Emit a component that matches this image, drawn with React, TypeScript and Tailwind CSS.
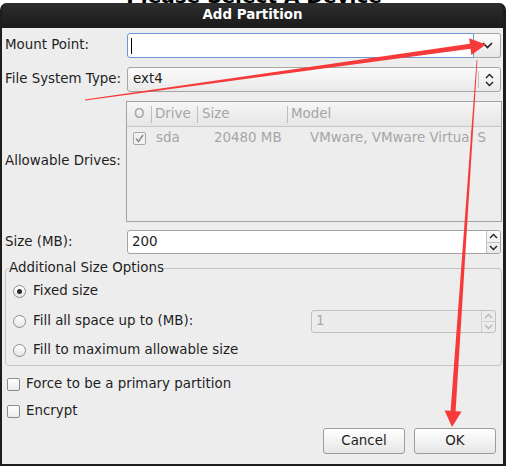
import React from "react";

function ChevDown({ color = "#222" }: { color?: string }) {
  return (
    <svg width="11" height="7" viewBox="0 0 11 7">
      <polyline points="1,1 5.5,5.5 10,1" fill="none" stroke={color} strokeWidth="1.6" />
    </svg>
  );
}
function ChevUp({ color = "#222" }: { color?: string }) {
  return (
    <svg width="9" height="6" viewBox="0 0 9 6">
      <polyline points="1,5 4.5,1.5 8,5" fill="none" stroke={color} strokeWidth="1.4" />
    </svg>
  );
}
function ChevDownSmall({ color = "#222" }: { color?: string }) {
  return (
    <svg width="9" height="6" viewBox="0 0 9 6">
      <polyline points="1,1 4.5,4.5 8,1" fill="none" stroke={color} strokeWidth="1.4" />
    </svg>
  );
}

function Radio({ checked }: { checked?: boolean }) {
  return (
    <div className="w-[13px] h-[13px] rounded-full border border-[#8c8c8c] bg-gradient-to-b from-[#ffffff] to-[#e6e6e6] flex items-center justify-center">
      {checked && <div className="w-[5px] h-[5px] rounded-full bg-[#2a2a2a]" />}
    </div>
  );
}

function Check() {
  return <div className="w-[13px] h-[13px] border border-[#8c8c8c] rounded-[2px] bg-gradient-to-b from-[#ffffff] to-[#ececec]" />;
}

function Label({ children }: { children: React.ReactNode }) {
  return <div className="w-[122px] shrink-0 text-[13.4px] text-[#1e1e1e]">{children}</div>;
}

export default function App() {
  return (
    <div className="relative w-[508px] h-[468px] bg-white overflow-hidden font-['DejaVu_Sans',sans-serif]">
      {/* fragment of window behind */}
      <div className="h-[3px] overflow-hidden flex justify-center">
        <div className="-mt-[16px] text-[20px] leading-[24px] font-bold text-black whitespace-nowrap">Please Select A Device</div>
      </div>

      {/* dialog */}
      <div className="w-[506px] h-[463px] bg-[#1d1d1d] rounded-t-[7px] border-l-2 border-r-[3px] border-b-2 border-[#1d1d1d] flex flex-col">
        <div className="h-[25px] shrink-0 flex items-center justify-center rounded-t-[7px] bg-gradient-to-b from-[#2e2e2e] to-[#1a1a1a] text-white font-bold text-[13.4px]">
          Add Partition
        </div>

        <div className="flex-1 bg-[#ededed] pl-[3px] pr-[2px] pt-[5px] flex flex-col text-[13.4px] text-[#1e1e1e]">
          {/* Mount point */}
          <div className="flex items-center h-[25px]">
            <Label>Mount Point:</Label>
            <div className="flex flex-1 h-[25px]">
              <div className="flex-1 bg-white border border-[#6f96cf] rounded-l-[3px] flex items-center pl-[3px]">
                <div className="w-[1px] h-[16px] bg-black" />
              </div>
              <div className="w-[27px] border border-l-0 border-[#a6a6a6] rounded-r-[3px] bg-gradient-to-b from-[#fbfbfb] to-[#e8e8e8] flex items-center justify-center">
                <ChevDown />
              </div>
            </div>
          </div>

          {/* FS type */}
          <div className="flex items-center h-[25px] mt-[9px]">
            <Label>File System Type:</Label>
            <div className="flex flex-1 h-[25px] border border-[#a6a6a6] rounded-[3px] bg-gradient-to-b from-[#fbfbfb] to-[#e9e9e9] items-center">
              <div className="flex-1 pl-[5px]">ext4</div>
              <div className="w-[1px] h-[17px] bg-[#c4c4c4]" />
              <div className="w-[21px] flex flex-col items-center justify-center gap-[2px]">
                <ChevUp />
                <ChevDownSmall />
              </div>
            </div>
          </div>

          {/* Allowable drives */}
          <div className="flex items-center h-[121px] mt-[9px]">
            <Label>Allowable Drives:</Label>
            <div className="flex-1 -ml-[1px] -mr-[1px] h-[121px] border border-[#a3a3a3] bg-[#ededed] flex flex-col text-[#a5a5a5] overflow-hidden">
              <div className="h-[25px] shrink-0 flex items-center border-b border-[#c6c6c6] bg-gradient-to-b from-[#f6f6f6] to-[#e6e6e6]">
                <div className="w-[24px] pl-[7px]">O</div>
                <div className="w-[1px] h-[17px] bg-[#bdbdbd]" />
                <div className="w-[45px] pl-[3px]">Drive</div>
                <div className="w-[1px] h-[17px] bg-[#bdbdbd]" />
                <div className="w-[89px] pl-[4px]">Size</div>
                <div className="w-[1px] h-[17px] bg-[#bdbdbd]" />
                <div className="pl-[3px]">Model</div>
              </div>
              <div className="h-[22px] flex items-center whitespace-nowrap">
                <div className="ml-[6px] w-[13px] h-[13px] border border-[#a8a8a8] rounded-[2px] flex items-center justify-center bg-[#f2f2f2]">
                  <svg width="9" height="9" viewBox="0 0 9 9">
                    <polyline points="1,4.5 3.5,7.5 8,1" fill="none" stroke="#8a8a8a" strokeWidth="1.5" />
                  </svg>
                </div>
                <div className="ml-[10px] w-[58px]">sda</div>
                <div className="w-[96px]">20480 MB</div>
                <div>VMware, VMware Virtual S</div>
              </div>
            </div>
          </div>

          {/* Size */}
          <div className="flex items-center h-[24px] mt-[8px]">
            <Label>Size (MB):</Label>
            <div className="flex flex-1 h-[24px] bg-white border border-[#a3a3a3] rounded-[3px] overflow-hidden">
              <div className="flex-1 flex items-center pl-[4px]">200</div>
              <div className="w-[14px] flex flex-col border-l border-[#c2c2c2] bg-gradient-to-b from-[#fafafa] to-[#e8e8e8]">
                <div className="flex-1 flex items-center justify-center border-b border-[#c2c2c2]"><ChevUp /></div>
                <div className="flex-1 flex items-center justify-center"><ChevDownSmall /></div>
              </div>
            </div>
          </div>

          {/* Additional size options */}
          <fieldset className="mt-[6px] mr-[-1px] border border-[#c4c4c4] rounded-[4px] px-[7px] pb-[3px] flex flex-col">
            <legend className="-ml-[4px] leading-[16px] px-0">Additional Size Options</legend>
            <div className="flex items-center h-[24px] mt-[3px] gap-[7px]">
              <Radio checked />
              <span>Fixed size</span>
            </div>
            <div className="flex items-center h-[23px] mt-[7px]">
              <Radio />
              <span className="ml-[7px] flex-1">Fill all space up to (MB):</span>
              <div className="w-[185px] h-[23px] flex border border-[#c0c0c0] rounded-[3px] bg-[#ececec] mr-[-2px]">
                <div className="flex-1 flex items-center pl-[4px] text-[#a8a8a8]">1</div>
                <div className="w-[14px] flex flex-col border-l border-[#d0d0d0]">
                  <div className="flex-1 flex items-center justify-center border-b border-[#d0d0d0]"><ChevUp color="#b5b5b5" /></div>
                  <div className="flex-1 flex items-center justify-center"><ChevDownSmall color="#b5b5b5" /></div>
                </div>
              </div>
            </div>
            <div className="flex items-center h-[24px] mt-[5px] gap-[7px]">
              <Radio />
              <span>Fill to maximum allowable size</span>
            </div>
          </fieldset>

          {/* Checkboxes */}
          <div className="flex items-center h-[20px] mt-[8px] pl-[2px] gap-[6px]">
            <Check />
            <span>Force to be a primary partition</span>
          </div>
          <div className="flex items-center h-[20px] mt-[7px] pl-[2px] gap-[6px]">
            <Check />
            <span>Encrypt</span>
          </div>

          {/* Buttons */}
          <div className="flex justify-end gap-[9px] mt-[7px] mr-[5px]">
            <div className="w-[82px] h-[26px] border border-[#9c9c9c] rounded-[3px] bg-gradient-to-b from-[#ffffff] to-[#e6e6e6] flex items-center justify-center">Cancel</div>
            <div className="w-[82px] h-[26px] border border-[#9c9c9c] rounded-[3px] bg-gradient-to-b from-[#ffffff] to-[#e6e6e6] flex items-center justify-center">OK</div>
          </div>
        </div>
      </div>

      {/* red annotation arrows */}
      <svg className="absolute left-0 top-0 pointer-events-none" width="508" height="468" viewBox="0 0 508 468">
        <polygon
          points="84.9,99.5 469.9,43.7 469.1,38.3 486,44.5 471.3,55 470.5,48.7 85.1,100.5"
          fill="#f63a3a"
        />
        <polygon
          points="476.6,60 450.6,410.8 444.6,410.4 452,427 461.6,411.6 455.6,411.2 477.4,60"
          fill="#f63a3a"
        />
      </svg>
    </div>
  );
}
